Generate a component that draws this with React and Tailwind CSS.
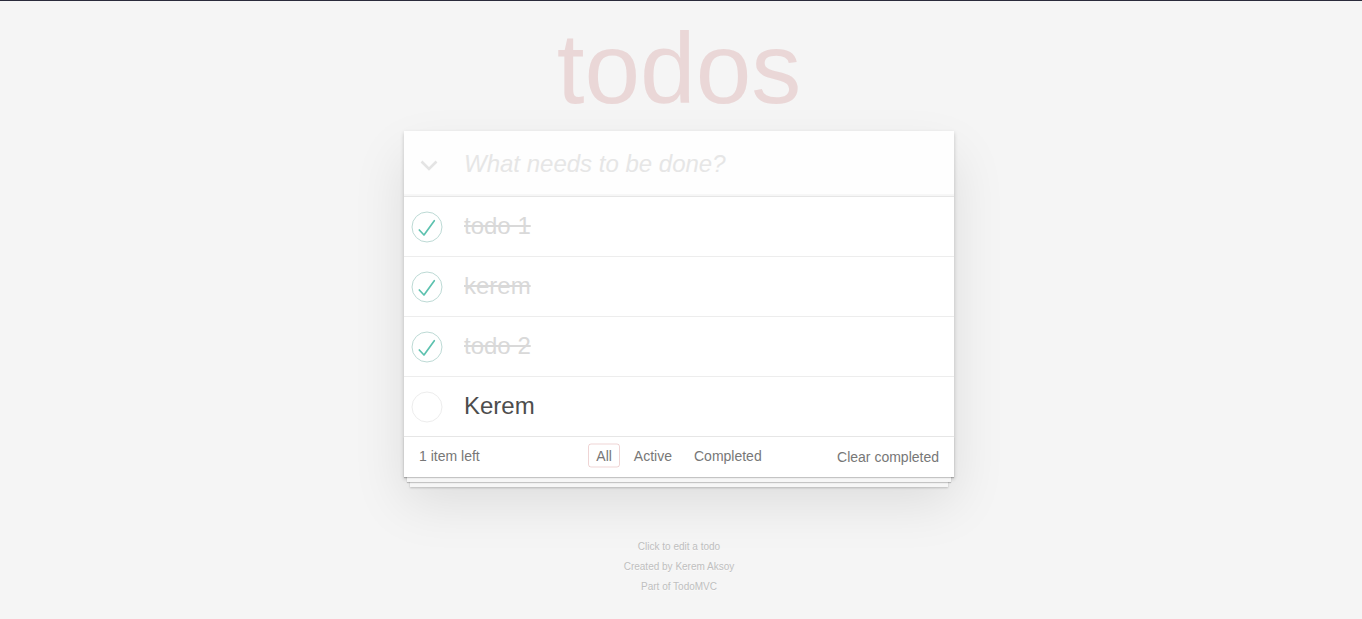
const TODOS = [
  { id: 1, title: 'todo 1', done: true },
  { id: 2, title: 'kerem', done: true },
  { id: 3, title: 'todo 2', done: true },
  { id: 4, title: 'Kerem', done: false }
]

function Check({ done }) {
  return (
    <svg width="32" height="32" viewBox="0 0 32 32" className="block">
      <circle cx="16" cy="16" r="15" fill="none" stroke={done ? '#bddad5' : '#ededed'} strokeWidth="1" />
      {done && (
        <polyline
          points="8.3,19 13,24 23.3,9.7"
          fill="none"
          stroke="#5dc2af"
          strokeWidth="1.7"
          strokeLinecap="round"
          strokeLinejoin="round"
        />
      )}
    </svg>
  )
}

export default function App() {
  const left = TODOS.filter(t => !t.done).length

  return (
    <div
      className="min-h-screen bg-[#f5f5f5] border-t border-[#2a2b3b] pr-[4px] text-[#4d4d4d] text-[14px]"
      style={{ fontFamily: '"Liberation Sans", Arial, sans-serif' }}
    >
      <h1 className="pt-[17px] mb-[13px] text-center text-[100px] leading-[100px] font-thin text-[rgba(175,47,47,0.15)]">
        todos
      </h1>

      {/* app card */}
      <section className="relative w-[550px] mx-auto bg-white shadow-[0_2px_4px_0_rgba(0,0,0,0.2),0_25px_50px_0_rgba(0,0,0,0.1)]">
        <header className="flex items-center h-[65px] bg-[rgba(0,0,0,0.003)] shadow-[inset_0_-2px_1px_rgba(0,0,0,0.03)]">
          <div className="w-[60px] shrink-0 flex">
            <svg width="18" height="11" viewBox="0 0 18 11" className="ml-[16px] mt-[3px]">
              <polyline points="1.5,1.5 9,9 16.5,1.5" fill="none" stroke="#e4e4e4" strokeWidth="2.6" />
            </svg>
          </div>
          <input
            className="flex-1 min-w-0 pr-[16px] bg-transparent outline-none text-[24px] leading-[1.4] italic text-[#4d4d4d] placeholder:text-[#e6e6e6]"
            placeholder="What needs to be done?"
          />
        </header>

        <ul className="border-t border-[#e6e6e6]">
          {TODOS.map((t, i) => (
            <li
              key={t.id}
              className={`flex items-center text-[24px] ${i < TODOS.length - 1 ? 'h-[60px] border-b border-[#ededed]' : 'h-[59px]'}`}
            >
              <div className="w-[60px] shrink-0 pl-[7px]">
                <Check done={t.done} />
              </div>
              <label
                className={`pr-[15px] leading-[1.2] ${t.done ? 'text-[#d9d9d9] line-through' : 'text-[#4d4d4d]'}`}
              >
                {t.title}
              </label>
            </li>
          ))}
        </ul>

        <footer className="relative border-t border-[#e6e6e6] px-[15px] py-[10px] h-[41px] text-[#777]">
          <div className="absolute inset-0 pointer-events-none shadow-[0_1px_1px_rgba(0,0,0,0.2),0_8px_0_-3px_#f6f6f6,0_9px_1px_-3px_rgba(0,0,0,0.2),0_16px_0_-6px_#f6f6f6,0_17px_2px_-6px_rgba(0,0,0,0.2)]" />
          <div className="relative grid grid-cols-[1fr_auto_1fr] grid-rows-[20px] items-center">
            <span className="text-left leading-[20px] -translate-y-px">
              <strong className="font-normal">{left}</strong> item left
            </span>
            <ul className="flex -translate-y-[1.5px]">
              <li><a className="block m-[3px] px-[7px] py-[3px] leading-[16px] rounded-[3px] border border-[rgba(175,47,47,0.2)]">All</a></li>
              <li><a className="block m-[3px] px-[7px] py-[3px] leading-[16px] rounded-[3px] border border-transparent">Active</a></li>
              <li><a className="block m-[3px] px-[7px] py-[3px] leading-[16px] rounded-[3px] border border-transparent">Completed</a></li>
            </ul>
            <button className="justify-self-end leading-[20px]">Clear completed</button>
          </div>
        </footer>
      </section>

      <footer className="mt-[65px] text-center text-[10px] leading-none text-[#bfbfbf] [text-shadow:0_1px_0_rgba(255,255,255,0.5)]">
        <p>Click to edit a todo</p>
        <p className="mt-[10px]">Created by Kerem Aksoy</p>
        <p className="mt-[10px]">Part of TodoMVC</p>
      </footer>
    </div>
  )
}
